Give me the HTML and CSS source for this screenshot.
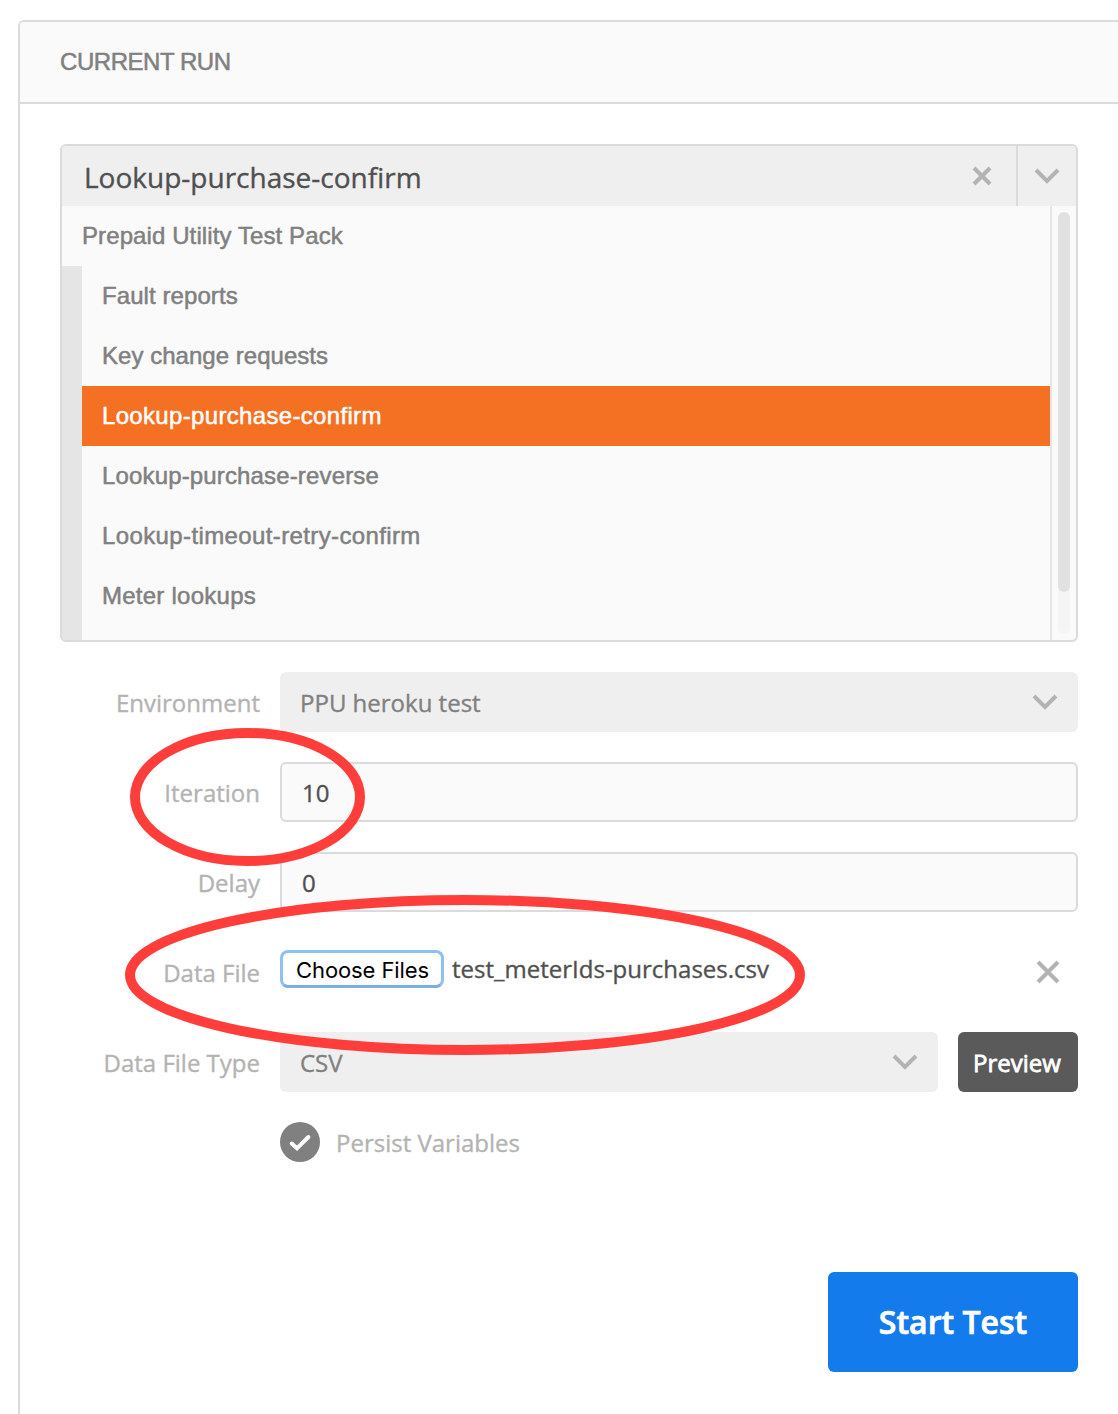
FILE: index.html
```html
<!DOCTYPE html>
<html lang="en">
<head>
<meta charset="utf-8">
<title>Current Run</title>
<link rel="stylesheet" href="styles.css">
</head>
<body>
<main class="panel">
  <header class="panel-head"><span class="t-head">CURRENT RUN</span></header>
  <div class="panel-body">
    <section class="combo">
      <div class="combo-head">
        <span class="combo-value">Lookup-purchase-confirm</span>
        <svg class="combo-clear" width="20" height="20" viewBox="0 0 20 20"><path d="M2 2L18 18M18 2L2 18"/></svg>
        <div class="combo-toggle"><svg class="chevron" width="26" height="16" viewBox="0 0 26 16"><path d="M2 2L13 13L24 2"/></svg></div>
      </div>
      <div class="combo-list">
        <div class="tree">
          <div class="item"><span class="t-pack">Prepaid Utility Test Pack</span></div>
          <div class="children">
            <div class="item"><span class="t-fault">Fault reports</span></div>
            <div class="item"><span class="t-key">Key change requests</span></div>
            <div class="item selected"><span class="t-confirm">Lookup-purchase-confirm</span></div>
            <div class="item"><span class="t-reverse">Lookup-purchase-reverse</span></div>
            <div class="item"><span class="t-timeout">Lookup-timeout-retry-confirm</span></div>
            <div class="item"><span class="t-meter">Meter lookups</span></div>
          </div>
        </div>
        <div class="scroll"><div class="track"><div class="thumb"></div></div></div>
      </div>
    </section>
    <div class="row">
      <label class="label">Environment</label>
      <div class="select"><span>PPU heroku test</span><svg class="chevron" width="26" height="16" viewBox="0 0 26 16"><path d="M2 2L13 13L24 2"/></svg></div>
    </div>
    <div class="row">
      <label class="label">Iteration</label>
      <div class="input">10</div>
    </div>
    <div class="row">
      <label class="label">Delay</label>
      <div class="input">0</div>
    </div>
    <div class="row">
      <label class="label">Data File</label>
      <div class="file">
        <button class="choose"><span>Choose Files</span></button>
        <span class="file-name">test_meterIds-purchases.csv</span>
        <svg class="file-clear" width="24" height="24" viewBox="0 0 24 24"><path d="M2 2L22 22M22 2L2 22"/></svg>
      </div>
    </div>
    <div class="row">
      <label class="label">Data File Type</label>
      <div class="select"><span>CSV</span><svg class="chevron" width="26" height="16" viewBox="0 0 26 16"><path d="M2 2L13 13L24 2"/></svg></div>
      <button class="preview"><span>Preview</span></button>
    </div>
    <div class="persist">
      <svg width="40" height="40" viewBox="0 0 40 40"><circle cx="20" cy="20" r="20" fill="#808080"/><path d="M11.7 21.5L17 26.3L28.4 15" fill="none" stroke="#fff" stroke-width="4" stroke-linecap="round"/></svg>
      <span class="persist-label">Persist Variables</span>
    </div>
    <button class="start"><span>Start Test</span></button>
  </div>
</main>
<svg class="annotations" width="1118" height="1414" viewBox="0 0 1118 1414">
  <ellipse cx="247.5" cy="797" rx="112.5" ry="64"/>
  <ellipse cx="465" cy="975" rx="335" ry="75"/>
</svg>
</body>
</html>
```
FILE: styles.css
```css
* { box-sizing: border-box; }
html, body { height: 100%; }
body {
  margin: 0;
  padding: 20px 0 0 18px;
  background: #fff;
  overflow: hidden;
  font: 24px/34px "Open Sans", sans-serif;
  color: #505050;
  -webkit-text-stroke: .35px currentColor;
}
button { border: 0; padding: 0; font: inherit; }
svg { flex: none; display: block; }
span { white-space: nowrap; }

.panel {
  height: 1394px;
  border: solid #dbdbdb;
  border-width: 2px 0 0 2px;
  border-radius: 6px 0 0 0;
  overflow: hidden;
}
.panel-head {
  height: 82px;
  padding: 0 40px;
  display: flex;
  align-items: center;
  border-bottom: 2px solid #dbdbdb;
  background: #fafafa;
  color: #808080;
  font-family: "Liberation Sans", sans-serif;
  -webkit-text-stroke: .5px #808080;
}
.panel-body {
  padding: 40px 40px 0;
  display: flex;
  flex-direction: column;
  gap: 30px;
}

.combo {
  height: 498px;
  border: 2px solid #dbdbdb;
  border-radius: 6px;
  overflow: hidden;
  background: #fafafa;
}
.combo-head {
  height: 60px;
  display: flex;
  align-items: center;
  background: #efefef;
  padding-left: 22px;
}
.combo-value { flex: 1; font-size: 28px; padding-top: 2px; }
.combo-clear { margin-right: 24px; }
.combo-clear path, .file-clear path, .chevron path { fill: none; stroke: #b3b3b3; stroke-width: 4; }
.combo-toggle {
  width: 60px;
  height: 60px;
  border-left: 2px solid #dbdbdb;
  display: flex;
  align-items: center;
  justify-content: center;
}
.combo-list { display: flex; height: 434px; }
.tree {
  flex: 1;
  overflow: hidden;
  font-family: "Liberation Sans", sans-serif;
  color: #808080;
  -webkit-text-stroke: .5px currentColor;
}
.item { height: 60px; padding-left: 20px; display: flex; align-items: center; }
.children { height: 380px; border-left: 20px solid #e5e5e5; }
.selected { background: #f47023; color: #fff; -webkit-text-stroke-color: #fff; }
.scroll { width: 26px; padding: 6px; border-left: 2px solid #e5e5e5; }
.track { width: 12px; height: 422px; border-radius: 6px; background: #f5f5f5; }
.thumb { height: 380px; border-radius: 6px; background: #e1e1e1; }

.t-head { letter-spacing: -.45px; }
.t-pack { letter-spacing: .1px; }
.t-fault { letter-spacing: .08px; }
.t-key { letter-spacing: .03px; }
.t-confirm { letter-spacing: .33px; }
.t-reverse { letter-spacing: .15px; }
.t-timeout { letter-spacing: .38px; }
.t-meter { letter-spacing: .25px; }

.row { height: 60px; display: flex; align-items: center; }
.label { width: 200px; margin-right: 20px; text-align: right; color: #b3b3b3; padding-top: 2px; white-space: nowrap; }
.select {
  flex: 1;
  height: 60px;
  padding: 0 20px;
  display: flex;
  align-items: center;
  justify-content: space-between;
  border-radius: 6px;
  background: #efefef;
  color: #808080;
}
.select span { padding-top: 2px; }
.input {
  flex: 1;
  height: 60px;
  padding: 2px 20px 0;
  display: flex;
  align-items: center;
  border: 2px solid #dbdbdb;
  border-radius: 6px;
  background: #fafafa;
}
.file { flex: 1; height: 60px; display: flex; align-items: center; }
.choose {
  width: 164px;
  height: 38px;
  margin-bottom: 6px;
  padding: 2px 0 0 1px;
  border: 3px solid #8fc0f5;
  border-bottom-color: #7baee8;
  border-radius: 8px;
  background: #fff;
  color: #000;
  font: 22px/30px Inter, sans-serif;
  letter-spacing: -.1px;
  -webkit-text-stroke: 0;
}
.file-name { margin: 0 auto 6px 8px; }
.file-clear { margin-right: 18px; }
.preview {
  width: 120px;
  height: 60px;
  margin-left: 20px;
  padding: 2px 2px 0 0;
  border-radius: 6px;
  background: #5a5a5a;
  color: #fff;
  -webkit-text-stroke: .8px #fff;
}
.persist { display: flex; align-items: center; gap: 16px; height: 40px; margin-left: 220px; color: #b3b3b3; }
.persist-label { padding-top: 2px; }
.label, .select, .input, .persist-label { -webkit-text-stroke-color: currentColor; }
.start {
  align-self: flex-end;
  width: 250px;
  height: 100px;
  margin-top: 80px;
  border-radius: 6px;
  background: #147bec;
  color: #fff;
  font-size: 32px;
  font-weight: 600;
  -webkit-text-stroke: .7px #fff;
}
.annotations { position: absolute; left: 0; top: 0; pointer-events: none; }
.annotations ellipse { fill: none; stroke: #ff3e3b; stroke-width: 10; }
```
